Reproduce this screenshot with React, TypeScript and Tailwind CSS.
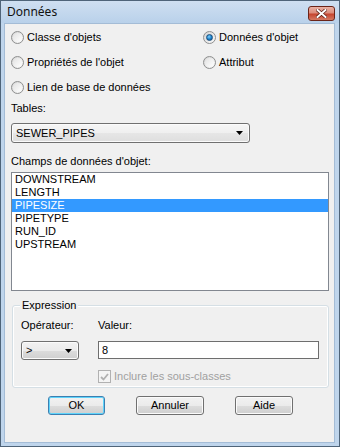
import React from "react";

const Radio = ({ checked, label }: { checked?: boolean; label: string }) => (
  <div className="flex items-center h-[13px]">
    <div className="w-[13px] h-[13px] rounded-full border border-[#8e8f8f] bg-[linear-gradient(135deg,#d4d4d4,#fbfbfb)] flex items-center justify-center">
      {checked ? (
        <div className="w-[7px] h-[7px] rounded-full border border-[#1b4f7d] bg-[radial-gradient(circle_at_40%_35%,#7fd0ff,#1a7fc7_55%,#0d4f8f)]" />
      ) : (
        <div className="w-[9px] h-[9px] rounded-full bg-[linear-gradient(135deg,#e2e2e2,#ffffff)]" />
      )}
    </div>
    <span className="ml-[3px] leading-[13px]">{label}</span>
  </div>
);

const Arrow = () => (
  <svg width="7" height="4" viewBox="0 0 7 4">
    <path d="M0 0H7L3.5 4Z" fill="#000" />
  </svg>
);

const Button = ({ label, width, focus }: { label: string; width: string; focus?: boolean }) => (
  <button
    className={
      focus
        ? `${width} h-[19px] rounded-[3px] border border-[#3c7fb1] shadow-[inset_0_0_0_1px_#5fd4fb] bg-[linear-gradient(to_bottom,#f2f2f2_0%,#ebebeb_50%,#dddddd_50%,#cfcfcf_100%)] leading-[13px]`
        : `${width} h-[19px] rounded-[3px] border border-[#707070] shadow-[inset_0_0_0_1px_#fbfbfb] bg-[linear-gradient(to_bottom,#f2f2f2_0%,#ebebeb_50%,#dddddd_50%,#cfcfcf_100%)] leading-[13px]`
    }
  >
    {label}
  </button>
);

const fields = ["DOWNSTREAM", "LENGTH", "PIPESIZE", "PIPETYPE", "RUN_ID", "UPSTREAM"];

export default function App() {
  return (
    <div className="w-[340px] h-[447px] flex flex-col border border-[#4f6479] bg-[#bfd5ec] text-[11px] text-black font-['Liberation_Sans',Arial,sans-serif]">
      {/* title bar */}
      <div className="h-[22px] flex items-center justify-between pl-[6px] pr-[4px] bg-[linear-gradient(to_bottom,#cfdff1,#b9d1ea)]">
        <span className="font-['Noto_Sans',sans-serif] text-[12px] text-[#111] leading-none">Données</span>
        <div className="w-[27px] h-[15px] mt-[2px] rounded-[3px] border border-[#6b2418] bg-[linear-gradient(to_bottom,#eab2a5_0%,#dc8c7b_45%,#c6452f_55%,#d47a63_100%)] flex items-center justify-center">
          <svg width="11" height="9" viewBox="0 0 11 9">
            <path d="M1.5 1L9.5 8M9.5 1L1.5 8" stroke="#5a1a10" strokeWidth="3.4" strokeLinecap="square" />
            <path d="M1.5 1L9.5 8M9.5 1L1.5 8" stroke="#fff" strokeWidth="2" strokeLinecap="square" />
          </svg>
        </div>
      </div>

      {/* client area */}
      <div className="flex-1 ml-[3px] mr-[4px] mb-[3px] bg-[#f0f0f0] border border-[#a4bcd6] pl-[6px] pt-[7px]">
        <div className="flex">
          <div className="w-[192px] flex flex-col gap-[12px]">
            <Radio label="Classe d'objets" />
            <Radio label="Propriétés de l'objet" />
            <Radio label="Lien de base de données" />
          </div>
          <div className="flex flex-col gap-[12px]">
            <Radio checked label="Données d'objet" />
            <Radio label="Attribut" />
          </div>
        </div>

        <div className="mt-[8px] leading-[13px]">Tables:</div>
        <div className="mt-[8px] w-[239px] h-[20px] rounded-[3px] border border-[#707070] shadow-[inset_0_0_0_1px_#fbfbfb] bg-[linear-gradient(to_bottom,#f6f6f6_0%,#efefef_50%,#e6e6e6_50%,#dedede_100%)] flex items-center justify-between pl-[4px] pr-[6px]">
          <span className="leading-[13px]">SEWER_PIPES</span>
          <Arrow />
        </div>

        <div className="mt-[12px] leading-[13px]">Champs de données d'objet:</div>
        <div className="mt-[4px] w-[318px] h-[119px] border border-[#828790] bg-white">
          {fields.map((f) => (
            <div
              key={f}
              className={
                f === "PIPESIZE"
                  ? "h-[13px] leading-[13px] pl-[3px] bg-[#3399ff] text-white"
                  : "h-[13px] leading-[13px] pl-[3px]"
              }
            >
              {f}
            </div>
          ))}
        </div>

        <div className="relative mt-[14px] ml-[1px] w-[317px] h-[83px] rounded-[3px] border border-[#d5dfe5] shadow-[inset_0_0_0_1px_#ffffff] pl-[8px] pt-[13px]">
          <span className="absolute left-[7px] top-[-7px] px-[2px] bg-[#f0f0f0] leading-[13px]">Expression</span>
          <div className="flex leading-[13px]">
            <span className="w-[77px]">Opérateur:</span>
            <span>Valeur:</span>
          </div>
          <div className="flex mt-[9px]">
            <div className="w-[58px] h-[19px] rounded-[3px] border border-[#707070] shadow-[inset_0_0_0_1px_#fbfbfb] bg-[linear-gradient(to_bottom,#f2f2f2_0%,#ebebeb_50%,#dddddd_50%,#cfcfcf_100%)] flex items-center justify-between pl-[4px] pr-[6px]">
              <span className="leading-[13px]">&gt;</span>
              <Arrow />
            </div>
            <div className="ml-[19px] w-[221px] h-[18px] border border-[#6e6e6e] bg-white flex items-center pl-[3px]">
              <span className="leading-[13px]">8</span>
            </div>
          </div>
          <div className="flex items-center mt-[10px] ml-[77px]">
            <div className="w-[13px] h-[13px] border border-[#b1b1b1] bg-[#f4f4f4] flex items-center justify-center">
              <svg width="9" height="8" viewBox="0 0 9 8">
                <path d="M1 4L3.5 6.5L8 1" stroke="#b0b0b0" strokeWidth="1.8" fill="none" />
              </svg>
            </div>
            <span className="ml-[3px] leading-[13px] text-[#a0a0a0]">Inclure les sous-classes</span>
          </div>
        </div>

        <div className="flex mt-[8px] ml-[37px] gap-[31px]">
          <Button label="OK" width="w-[57px]" focus />
          <Button label="Annuler" width="w-[68px]" />
          <Button label="Aide" width="w-[58px]" />
        </div>
      </div>
    </div>
  );
}
